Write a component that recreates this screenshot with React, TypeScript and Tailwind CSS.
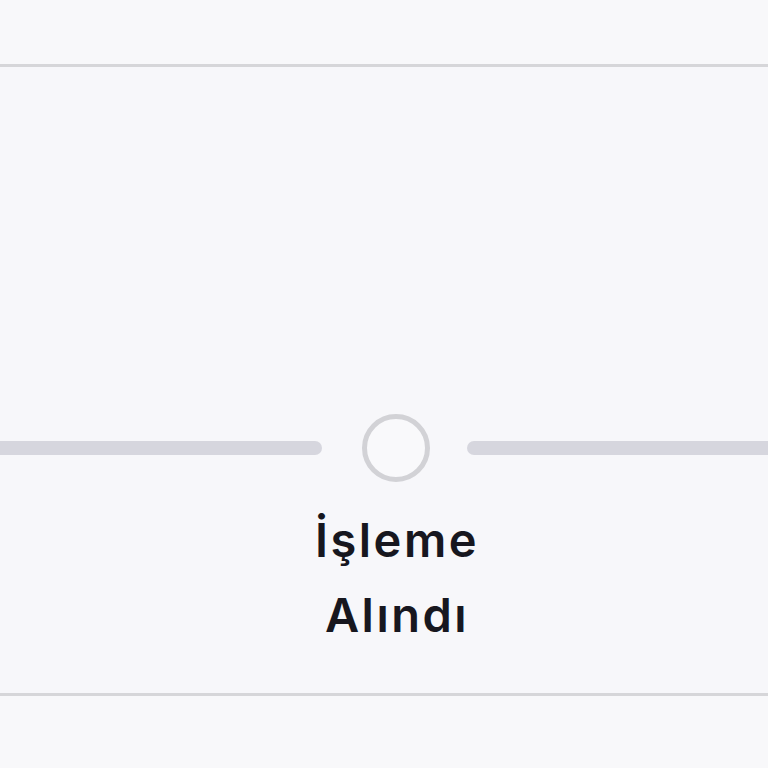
export default function App() {
  return (
    <div
      className="w-[768px] h-[768px] bg-[#f8f8fa] flex flex-col overflow-hidden"
      style={{ fontFamily: 'Inter, "Noto Sans", sans-serif' }}
    >
      <div className="h-[67px] shrink-0 border-b-[3px] border-[#d6d6d9]" />
      <div className="h-[629px] shrink-0 bg-[#f7f7fa] border-b-[3px] border-[#d6d6d9] pt-[347px]">
        <div className="flex items-center">
          <div className="w-[322px] h-[14px] rounded-r-full bg-[#d6d6de]" />
          <div className="ml-[40px] w-[68px] h-[68px] rounded-full border-[5px] border-[#d2d2d6] bg-[#f9f9fb]" />
          <div className="ml-[37px] flex-1 h-[14px] rounded-l-full bg-[#d6d6de]" />
        </div>
        <div className="w-[300px] ml-[247px] mt-[20px] text-center text-[47px] leading-[75px] tracking-[2.5px] font-semibold text-[#17171f]">
          İşleme
          <br />
          Alındı
        </div>
      </div>
      <div className="flex-1" />
    </div>
  )
}
